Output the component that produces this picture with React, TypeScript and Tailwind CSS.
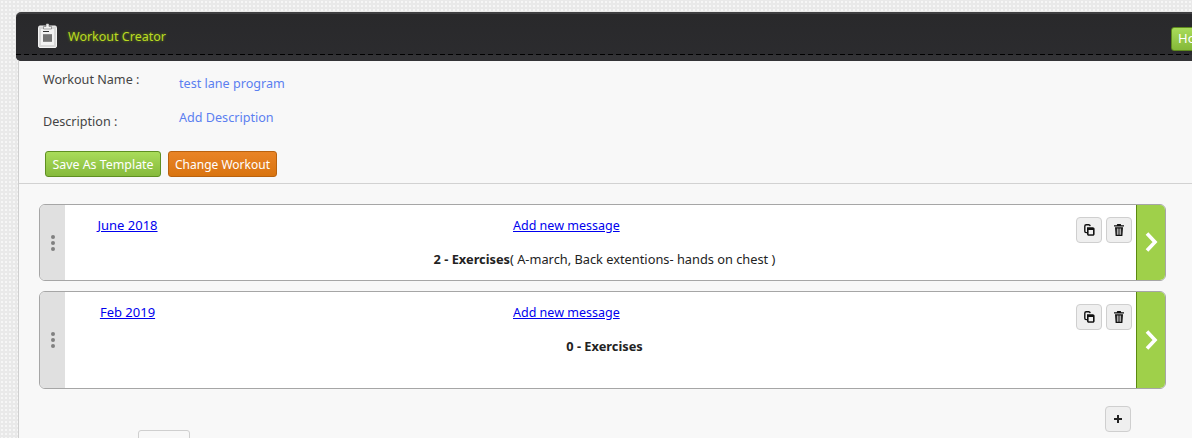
import React from "react";

const font = "font-['Noto_Sans','Open_Sans',sans-serif]";

function CopyIcon() {
  return (
    <svg width="11" height="12" viewBox="0 0 11 12" fill="none">
      <path d="M3 8.6H2.2C1.3 8.6 .8 8 .8 7.2V2.2C.8 1.3 1.3.8 2.2.8H4.6C5.4.8 6 1.2 6.2 2.2" stroke="#111" strokeWidth="1.4" />
      <path d="M3 3.2H8.8C9.8 3.2 10.6 4 10.6 4.9V10C10.6 11 9.8 11.8 8.8 11.8H4.7C3.7 11.8 3 11 3 10Z" fill="#111" />
      <rect x="4.6" y="6" width="4.4" height="4.3" fill="#efefef" />
    </svg>
  );
}

function TrashIcon() {
  return (
    <svg width="10" height="12" viewBox="0 0 10 12" fill="#111">
      <path d="M3.3 0H6.7L7.3 1.3H10V2.6H0V1.3H2.7Z" />
      <path d="M1 3.3H9L8.4 12H1.6ZM2.9 4.6V10.8H3.7V4.6ZM4.6 4.6V10.8H5.4V4.6ZM6.3 4.6V10.8H7.1V4.6Z" fillRule="evenodd" />
    </svg>
  );
}

function ClipboardIcon() {
  return (
    <svg width="19" height="25" viewBox="0 0 19 25">
      <rect x=".5" y="3" width="18" height="21.5" rx="1.5" fill="#d8d8d8" stroke="#f2f2f2" />
      <rect x="3" y="6" width="13" height="16" fill="#f2f2f2" />
      <rect x="5" y="11" width="9" height="8" fill="#8a8a8a" />
      <path d="M5 13H14M5 15H14M5 17H14" stroke="#5c5c5c" strokeWidth="1" />
      <path d="M5 8.5H11" stroke="#333" strokeWidth="1" />
      <path d="M5.5 6V3.5H8V1.2C8 .5 11 .5 11 1.2V3.5H13.5V6Z" fill="#f0f0f0" stroke="#555" strokeWidth=".5" />
    </svg>
  );
}

function IconButton({ children }: { children: React.ReactNode }) {
  return (
    <button className="flex h-[26px] w-[26px] items-center justify-center rounded-[4px] border border-[#cfcfcf] bg-[#efefef]">
      {children}
    </button>
  );
}

function WorkoutCard({
  date,
  height,
  summary,
  list,
}: {
  date: string;
  height: string;
  summary: string;
  list?: string;
}) {
  return (
    <div className={`flex ${height} overflow-hidden rounded-[6px] border border-[#a6a6a6] bg-white`}>
      <div className="flex w-[25px] shrink-0 flex-col items-center justify-center gap-[2px] bg-[#e0e0e0] pl-[1px]">
        <span className="h-[4px] w-[4px] rounded-full bg-[#808080]" />
        <span className="h-[4px] w-[4px] rounded-full bg-[#808080]" />
        <span className="h-[4px] w-[4px] rounded-full bg-[#808080]" />
      </div>
      <div className="min-w-0 flex-1 pr-[4px]">
        <div className="flex items-start pt-[12px]">
          <a className="w-[125px] text-center text-[13px] leading-[17px] text-[#0000ee] underline">{date}</a>
          <a className="ml-[323px] text-[12.5px] leading-[17px] text-[#0000ee] underline">Add new message</a>
          <div className="ml-auto flex gap-[4px]">
            <IconButton><CopyIcon /></IconButton>
            <IconButton><TrashIcon /></IconButton>
          </div>
        </div>
        <p className="mt-[7px] pl-[12px] text-center text-[12.8px] leading-[18px] text-[#222]">
          <b className="font-bold">{summary}</b>
          {list}
        </p>
      </div>
      <div className="flex w-[29px] shrink-0 items-center justify-center border-l border-[#5b8a10] bg-[#9fd04a] pb-[1px]">
        <svg width="15" height="22" viewBox="0 0 15 22" fill="none">
          <path d="M3 2.5L11 11L3 19.5" stroke="#fff" strokeWidth="3.6" />
        </svg>
      </div>
    </div>
  );
}

export default function App() {
  return (
    <div className={`${font} h-[438px] w-[1192px] overflow-hidden bg-[#e9e9e9] bg-[radial-gradient(#f6f6f6_1px,transparent_1px)] bg-[length:4px_4px] pl-4 pt-3`}>
      <header className="h-[49px] overflow-hidden rounded-tl-[5px] rounded-bl-[5px] border-t-2 border-[#3f3f41] bg-gradient-to-b from-[#29292b] to-[#2c2c2f]">
        <div className="flex h-[41px] items-start bg-[repeating-linear-gradient(90deg,#000_0_5px,transparent_5px_8px)] bg-[length:100%_1px] bg-bottom bg-no-repeat pl-[22px]">
          <span className="mt-[9px]"><ClipboardIcon /></span>
          <h1 className="ml-[11px] mt-[14px] text-[12.5px] font-normal text-[#b9da22] [text-shadow:0_0_3px_#6d8a10]">Workout Creator</h1>
          <button className="ml-auto mr-[-39px] mt-[13px] h-[24px] w-[60px] shrink-0 rounded-[3px] border border-[#5f8a1e] bg-gradient-to-b from-[#a9dc5a] to-[#84b838] pl-[6px] text-left text-[13px] text-white">
            Home
          </button>
        </div>
        <div className="h-[6px] bg-[#333336]" />
      </header>

      <main className="ml-[2px] h-[400px] border-l border-[#cfcfcf] bg-[#f8f8f8]">
        <section className="border-b border-[#d2d2d2] pb-[6px]">
          <div className="flex items-start pl-[24px] pt-[10px] text-[12.6px] leading-[18px]">
            <span className="w-[136px] text-[#444]">Workout Name :</span>
            <a className="mt-[4px] text-[#5b7ff0]">test lane program</a>
          </div>
          <div className="mt-[16px] flex items-start pl-[24px] text-[12.6px] leading-[18px]">
            <span className="mt-[4px] w-[136px] text-[#444]">Description :</span>
            <a className="text-[#5b7ff0]">Add Description</a>
          </div>
          <div className="ml-[26px] mt-[20px] flex gap-[7px]">
            <button className="h-[26px] w-[116px] rounded-[3px] border border-[#5f8f22] bg-gradient-to-b from-[#a9dc5a] to-[#86ba3c] pt-[2px] text-[12.4px] text-white">
              Save As Template
            </button>
            <button className="h-[26px] w-[109px] rounded-[3px] border border-[#b9620f] bg-gradient-to-b from-[#e98426] to-[#d9740f] pt-[2px] text-[12px] text-white">
              Change Workout
            </button>
          </div>
        </section>

        <div className="ml-[20px] mr-[26px] mt-[20px] flex flex-col gap-[10px]">
          <WorkoutCard
            date="June 2018"
            height="h-[77px]"
            summary="2 - Exercises"
            list="( A-march, Back extentions- hands on chest )"
          />
          <WorkoutCard date="Feb 2019" height="h-[98px]" summary="0 - Exercises" />
        </div>

        <div className="relative mt-[17px] flex h-[40px] items-start justify-end pr-[61px]">
          <button className="flex h-[26px] w-[26px] items-center justify-center rounded-[4px] border border-[#cfcfcf] bg-[#efefef]">
            <svg width="10" height="10" viewBox="0 0 10 10"><path d="M5 1V9M1 5H9" stroke="#222" strokeWidth="2" /></svg>
          </button>
          <div className="absolute left-[119px] top-[24px] h-[20px] w-[52px] rounded-[3px] border border-[#cfcfcf] bg-[#f8f8f8]" />
        </div>
      </main>
    </div>
  );
}
